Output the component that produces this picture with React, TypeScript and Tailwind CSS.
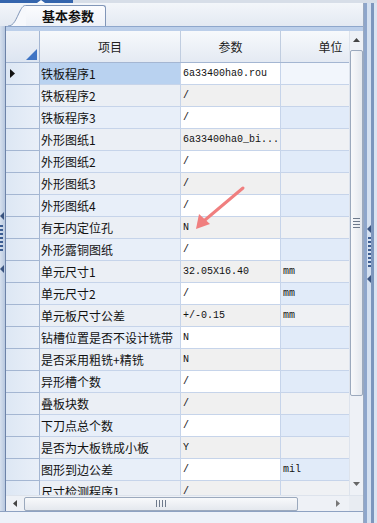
import React from 'react';

interface ParamRow {
  name: string;
  value: string;
  unit: string;
}

const rows: ParamRow[] = [
  { name: '铁板程序1', value: '6a33400ha0.rou', unit: '' },
  { name: '铁板程序2', value: '/', unit: '' },
  { name: '铁板程序3', value: '/', unit: '' },
  { name: '外形图纸1', value: '6a33400ha0_bi...', unit: '' },
  { name: '外形图纸2', value: '/', unit: '' },
  { name: '外形图纸3', value: '/', unit: '' },
  { name: '外形图纸4', value: '/', unit: '' },
  { name: '有无内定位孔', value: 'N', unit: '' },
  { name: '外形露铜图纸', value: '/', unit: '' },
  { name: '单元尺寸1', value: '32.05X16.40', unit: 'mm' },
  { name: '单元尺寸2', value: '/', unit: 'mm' },
  { name: '单元板尺寸公差', value: '+/-0.15', unit: 'mm' },
  { name: '钻槽位置是否不设计铣带', value: 'N', unit: '' },
  { name: '是否采用粗铣+精铣', value: 'N', unit: '' },
  { name: '异形槽个数', value: '/', unit: '' },
  { name: '叠板块数', value: '/', unit: '' },
  { name: '下刀点总个数', value: '/', unit: '' },
  { name: '是否为大板铣成小板', value: 'Y', unit: '' },
  { name: '图形到边公差', value: '/', unit: 'mil' },
  { name: '尺寸检测程序1', value: '/', unit: '' },
];

const cjk = "font-['Noto_Sans_CJK_SC',sans-serif]";
const mono = "font-['Liberation_Mono',monospace]";

// little dotted grip on the splitters
const Dots: React.FC<{ count: number }> = ({ count }) => (
  <div className="flex flex-col gap-[2px] items-center">
    {Array.from({ length: count }).map((_, i) => (
      <div key={i} className="w-[3px] h-[2px] bg-[#3c5d92]" />
    ))}
  </div>
);

const LeftTri: React.FC = () => (
  <svg width="4" height="8" viewBox="0 0 4 8">
    <path d="M0 4 L4 0 L4 8 Z" fill="#3a5480" />
  </svg>
);

const App: React.FC = () => {
  return (
    <div className={`relative w-[377px] h-[523px] overflow-hidden flex flex-col bg-[#e8eef7] ${cjk}`}>
      {/* top strip */}
      <div className="h-[3px] flex shrink-0">
        <div className="w-[73px] bg-[#3465ad] relative">
          <div className="absolute left-[37px] top-0 w-0 h-0 border-l-[4px] border-r-[4px] border-b-[3px] border-l-transparent border-r-transparent border-b-white" />
        </div>
        <div className="flex-1 bg-[#d7dee8]" />
      </div>

      <div className="flex flex-1 min-h-0">
        <div className="flex-1 flex flex-col min-w-0">
          {/* tab bar */}
          <div className="h-[23px] shrink-0 flex items-end bg-gradient-to-b from-[#f3f6fa] to-[#e3e9f2] pl-[8px]">
            <div className="flex items-end h-[21px]">
              <svg width="18" height="21" viewBox="0 0 18 21" className="block">
                <path d="M0 21 C6 21 8 14 12 6 C14 2 16 0 18 0 L18 21 Z" fill="#f6f8fc" />
                <path d="M0 21 C6 21 8 14 12 6 C14 2 16 0 18 0.5" fill="none" stroke="#8196b8" strokeWidth="1" />
              </svg>
              <div className="h-[21px] w-[80px] border-t border-r border-[#8196b8] rounded-tr-[3px] bg-gradient-to-b from-[#fbfcfe] to-[#eef2f8] flex items-center pl-[16px] text-[13px] font-bold text-[#111]">
                基本参数
              </div>
            </div>
          </div>

          <div className="flex flex-1 min-h-0">
            {/* left splitter */}
            <div className="w-[6px] shrink-0 bg-gradient-to-r from-[#d6e0ee] to-[#b8c8df] border-r border-[#6d83a8] flex flex-col items-start pt-[186px]">
              <LeftTri />
              <div className="h-[5px]" />
              <Dots count={7} />
              <div className="h-[14px]" />
              <LeftTri />
            </div>

            {/* grid panel */}
            <div className="flex-1 flex flex-col min-w-0">
              <div className="h-[5px] shrink-0 bg-[#bccfea] border-t border-[#8ea7cc]" />

              <div className="flex flex-1 min-h-0">
                <div className="flex-1 min-w-0 overflow-hidden bg-[#f0f0f0]">
                  {/* header row */}
                  <div className="flex h-[32px] w-[420px] border-b border-[#a4b6d2] bg-gradient-to-b from-[#f7f9fc] to-[#e4eaf3] text-[12px] text-[#222]">
                    <div className="w-[34px] shrink-0 border-r border-[#a4b6d2] relative bg-gradient-to-b from-[#eef2f8] to-[#dde5f1]">
                      <svg width="11" height="11" viewBox="0 0 11 11" className="absolute right-[2px] bottom-[2px]">
                        <path d="M11 0 L11 11 L0 11 Z" fill="#3f74c4" />
                      </svg>
                    </div>
                    <div className="w-[141px] shrink-0 border-r border-[#c0cde0] flex items-center justify-center">项目</div>
                    <div className="w-[100px] shrink-0 border-r border-[#c0cde0] flex items-center justify-center">参数</div>
                    <div className="w-[100px] shrink-0 border-r border-[#c0cde0] flex items-center justify-center">单位</div>
                  </div>

                  {rows.map((row, i) => {
                    const even = i % 2 === 1;
                    const selected = i === 0;
                    return (
                      <div key={row.name} className="flex h-[22px] w-[420px] text-[12px] text-[#111]">
                        <div className="w-[34px] shrink-0 border-r border-b border-[#a4b6d2] bg-gradient-to-r from-[#dde7f4] to-[#e9eff8] flex items-center pl-[4px]">
                          {selected && (
                            <svg width="5" height="9" viewBox="0 0 5 9">
                              <path d="M0 0 L5 4.5 L0 9 Z" fill="#111" />
                            </svg>
                          )}
                        </div>
                        <div
                          className={`w-[141px] shrink-0 border-r border-b border-[#c6d4ea] flex items-center pl-[1px] whitespace-nowrap overflow-hidden ${
                            selected ? 'bg-[#b9d2f0]' : even ? 'bg-[#ebeff5]' : 'bg-[#e8eff9]'
                          }`}
                        >
                          {row.name}
                        </div>
                        <div
                          className={`w-[100px] shrink-0 border-r border-b border-[#c6d4ea] flex items-center pl-[2px] text-[10px] whitespace-nowrap overflow-hidden ${mono} ${
                            even ? 'bg-[#f0f0f0]' : 'bg-white'
                          }`}
                        >
                          {row.value}
                        </div>
                        <div
                          className={`w-[100px] shrink-0 border-r border-b border-[#c6d4ea] flex items-center pl-[2px] text-[10px] ${mono} ${
                            selected ? 'bg-[#f2f6fc]' : even ? 'bg-[#eff1f4]' : 'bg-[#e1ebf9]'
                          }`}
                        >
                          {row.unit}
                        </div>
                      </div>
                    );
                  })}
                </div>

                {/* vertical scrollbar */}
                <div className="w-[14px] shrink-0 flex flex-col items-center bg-[#eef1f6] border-l border-[#dde3ec]">
                  <div className="h-[18px] flex items-center justify-center">
                    <svg width="7" height="4" viewBox="0 0 7 4">
                      <path d="M0 4 L3.5 0 L7 4 Z" fill="#444" />
                    </svg>
                  </div>
                  <div className="w-[13px] h-[346px] mt-[1px] rounded-[2px] border border-[#9ba9bd] bg-gradient-to-r from-[#f8f9fb] to-[#e4e8ee] flex items-center justify-center">
                    <div className="flex flex-col gap-[2px]">
                      <div className="w-[7px] h-px bg-[#6e7a8c]" />
                      <div className="w-[7px] h-px bg-[#6e7a8c]" />
                      <div className="w-[7px] h-px bg-[#6e7a8c]" />
                      <div className="w-[7px] h-px bg-[#6e7a8c]" />
                    </div>
                  </div>
                  <div className="flex-1" />
                  <div className="h-[22px] flex items-center justify-center">
                    <svg width="7" height="4" viewBox="0 0 7 4">
                      <path d="M0 0 L7 0 L3.5 4 Z" fill="#666" />
                    </svg>
                  </div>
                </div>
              </div>

              {/* horizontal scrollbar */}
              <div className="h-[16px] shrink-0 flex items-center bg-[#eef1f6] border-t border-[#dde3ec]">
                <div className="w-[18px] flex items-center justify-center">
                  <svg width="4" height="7" viewBox="0 0 4 7">
                    <path d="M0 3.5 L4 0 L4 7 Z" fill="#444" />
                  </svg>
                </div>
                <div className="w-[274px] h-[14px] rounded-[2px] border border-[#9ba9bd] bg-gradient-to-b from-[#f8f9fb] to-[#e4e8ee] flex items-center justify-center">
                  <div className="flex gap-[2px]">
                    <div className="w-px h-[7px] bg-[#6e7a8c]" />
                    <div className="w-px h-[7px] bg-[#6e7a8c]" />
                    <div className="w-px h-[7px] bg-[#6e7a8c]" />
                    <div className="w-px h-[7px] bg-[#6e7a8c]" />
                  </div>
                </div>
                <div className="flex-1" />
                <div className="w-[22px] flex items-center justify-center">
                  <svg width="4" height="7" viewBox="0 0 4 7">
                    <path d="M0 0 L4 3.5 L0 7 Z" fill="#777" />
                  </svg>
                </div>
                <div className="w-[14px] h-[16px] bg-[#e8ecf2]" />
              </div>
            </div>
          </div>

          {/* bottom strip */}
          <div className="h-[12px] shrink-0 bg-[#edf2f9] border-t border-[#8ea2c2]" />
        </div>

        {/* right splitter */}
        <div className="w-[14px] shrink-0 flex bg-[#c6d5ea]">
          <div className="w-px bg-[#9aa9bf]" />
          <div className="w-[3px] bg-[#8ea6cb]" />
          <div className="w-[4px] bg-[#d4e0f0] flex flex-col items-center pt-[222px]">
            <LeftTri />
            <div className="h-[4px]" />
            <Dots count={8} />
            <div className="h-[8px]" />
            <LeftTri />
          </div>
          <div className="w-[3px] bg-[#7d96bd]" />
          <div className="flex-1 bg-[#dbe4f1]" />
        </div>
      </div>

      {/* red annotation arrow */}
      <svg className="absolute left-0 top-0 pointer-events-none" width="377" height="523" viewBox="0 0 377 523">
        <line x1="243" y1="188" x2="205" y2="220" stroke="#f07f7f" strokeWidth="3" strokeLinecap="round" />
        <path d="M196 229 L199 214 L210 224 Z" fill="#f07f7f" />
      </svg>
    </div>
  );
};

export default App;
